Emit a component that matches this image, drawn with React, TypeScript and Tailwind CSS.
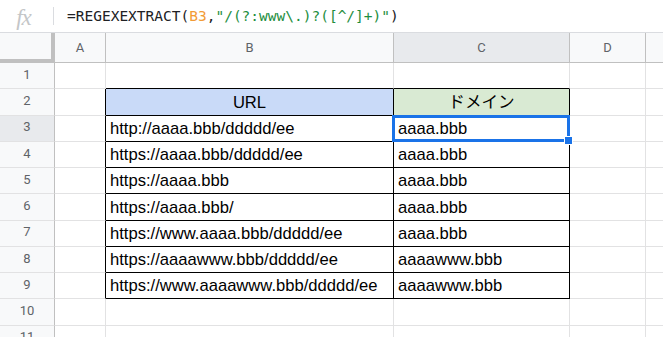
import React from "react";

const rows: [string, string][] = [
  ["http://aaaa.bbb/ddddd/ee", "aaaa.bbb"],
  ["https://aaaa.bbb/ddddd/ee", "aaaa.bbb"],
  ["https://aaaa.bbb", "aaaa.bbb"],
  ["https://aaaa.bbb/", "aaaa.bbb"],
  ["https://www.aaaa.bbb/ddddd/ee", "aaaa.bbb"],
  ["https://aaaawww.bbb/ddddd/ee", "aaaawww.bbb"],
  ["https://www.aaaawww.bbb/ddddd/ee", "aaaawww.bbb"],
];

const cellText = "flex items-end pb-[2px] px-[4px] leading-[20px] whitespace-nowrap";

function FormulaBar() {
  return (
    <div className="flex shrink-0 items-center h-[33px] border-b border-[#dadce0] bg-white">
      <div className="w-[53px] flex items-center justify-center pr-[6px] pt-[2px]">
        <span className="font-['Liberation_Serif',serif] italic text-[23px] leading-none text-[#c4c6c8] tracking-[-1px]">
          fx
        </span>
      </div>
      <div className="w-px h-[18px] bg-[#dadce0]" />
      <div className="pl-[13px] pt-[2px] font-['DejaVu_Sans_Mono',monospace] text-[14.5px] text-[#202124] whitespace-nowrap">
        =REGEXEXTRACT(<span className="text-[#f29b36]">B3</span>,
        <span className="text-[#1e8e3e]">"/(?:www\.)?([^/]+)"</span>)
      </div>
    </div>
  );
}

function ColumnHeaders() {
  const head = "flex items-center justify-center h-full border-r border-[#c0c0c0] text-[13px] text-[#5f6368]";
  return (
    <div className="flex shrink-0 h-[30px] border-b border-[#c0c0c0] bg-[#f8f9fa] font-['Roboto',sans-serif]">
      <div className="w-[55px] shrink-0 h-[30px] border-r-4 border-b-4 border-[#c0c0c0] bg-[#f8f9fa]" />
      <div className={`${head} w-[51px] shrink-0`}>A</div>
      <div className={`${head} w-[288px] shrink-0`}>B</div>
      <div className={`${head} w-[176px] shrink-0 bg-[#e8eaed]`}>C</div>
      <div className={`${head} w-[76px] shrink-0`}>D</div>
      <div className="flex-1" />
    </div>
  );
}

function Row({ n }: { n: number }) {
  const inTable = n >= 2 && n <= 9;
  const edge = inTable || n === 1;
  const data = n >= 3 && n <= 9 ? rows[n - 3] : null;
  const selected = n === 3;

  return (
    <div className="flex h-[26.25px] shrink-0">
      <div
        className={`w-[55px] shrink-0 flex items-center justify-center pb-[2px] border-r border-r-[#c0c0c0] border-b border-b-[#e2e2e3] font-['Roboto',sans-serif] text-[13px] text-[#5f6368] ${
          selected ? "bg-[#e8eaed]" : "bg-[#f8f9fa]"
        }`}
      >
        {n}
      </div>
      <div
        className={`w-[51px] shrink-0 border-b border-b-[#e2e2e3] border-r ${
          inTable ? "border-r-black" : "border-r-[#e2e2e3]"
        }`}
      />
      <div
        className={`w-[288px] shrink-0 overflow-hidden border-r border-b ${
          inTable ? "border-r-black" : "border-r-[#e2e2e3]"
        } ${edge ? "border-b-black" : "border-b-[#e2e2e3]"} ${n === 2 ? "bg-[#c9daf8] justify-center" : ""} ${cellText}`}
      >
        {n === 2 ? "URL" : data?.[0]}
      </div>
      <div
        className={`relative w-[176px] shrink-0 border-r border-b ${
          inTable ? "border-r-black" : "border-r-[#e2e2e3]"
        } ${edge ? "border-b-black" : "border-b-[#e2e2e3]"} ${
          n === 2 ? "bg-[#d9ead3] justify-center" : ""
        } ${cellText}`}
      >
        {n === 2 ? "ドメイン" : data?.[1]}
        {selected && (
          <div className="absolute z-10 -left-[2px] -top-[1px] -right-[1px] -bottom-[1px] border-[3px] border-[#1a73e8]">
            <div className="absolute -right-[6px] -bottom-[6px] w-[9px] h-[9px] bg-[#1a73e8] border border-white" />
          </div>
        )}
      </div>
      <div className="w-[76px] shrink-0 border-r border-b border-[#e2e2e3]" />
      <div className="flex-1 border-b border-[#e2e2e3]" />
    </div>
  );
}

export default function App() {
  return (
    <div className="w-[663px] h-[337px] overflow-hidden bg-white flex flex-col font-['Liberation_Sans','Noto_Sans_CJK_JP',sans-serif] text-[16.6px] text-black">
      <FormulaBar />
      <ColumnHeaders />
      {Array.from({ length: 11 }, (_, i) => (
        <Row key={i} n={i + 1} />
      ))}
    </div>
  );
}
